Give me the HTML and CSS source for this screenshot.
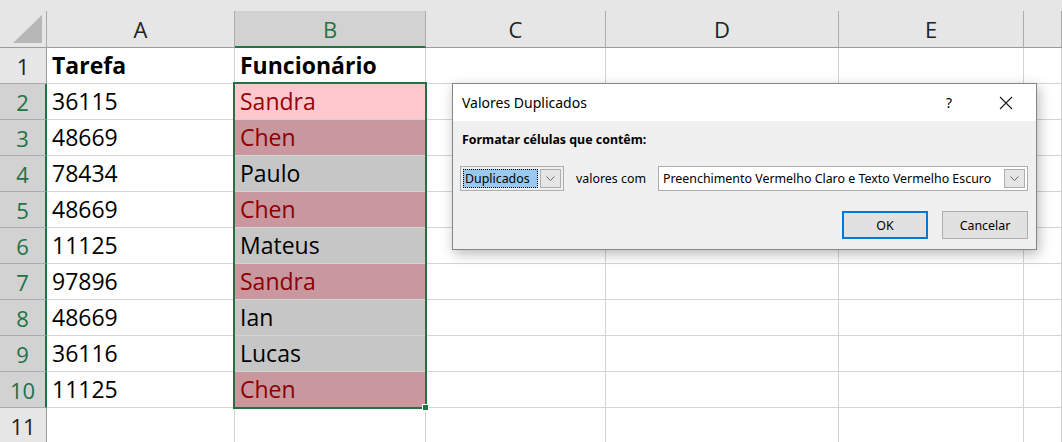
FILE: index.html
```html
<!DOCTYPE html>
<html lang="pt">
<head>
    <meta charset="UTF-8">
    <title>Valores Duplicados</title>
    <link rel="stylesheet" href="styles.css">
</head>
<body>

    <div class="sheet">
        <div class="strip"></div>

        <div class="corner">
            <svg width="30" height="29" viewBox="0 0 30 29"><polygon points="29,0 29,28 0,28" fill="#b7b7b7"/></svg>
        </div>
        <div class="colhead">A</div>
        <div class="colhead sel">B</div>
        <div class="colhead">C</div>
        <div class="colhead">D</div>
        <div class="colhead">E</div>
        <div class="colhead"></div>

        <div class="rowhead">1</div>
        <div class="cell bold">Tarefa</div>
        <div class="cell bold">Funcionário</div>
        <div class="cell"></div><div class="cell"></div><div class="cell"></div><div class="cell"></div>

        <div class="rowhead sel">2</div>
        <div class="cell">36115</div>
        <div class="cell dup active">Sandra</div>
        <div class="cell"></div><div class="cell"></div><div class="cell"></div><div class="cell"></div>

        <div class="rowhead sel">3</div>
        <div class="cell">48669</div>
        <div class="cell dup">Chen</div>
        <div class="cell"></div><div class="cell"></div><div class="cell"></div><div class="cell"></div>

        <div class="rowhead sel">4</div>
        <div class="cell">78434</div>
        <div class="cell picked">Paulo</div>
        <div class="cell"></div><div class="cell"></div><div class="cell"></div><div class="cell"></div>

        <div class="rowhead sel">5</div>
        <div class="cell">48669</div>
        <div class="cell dup">Chen</div>
        <div class="cell"></div><div class="cell"></div><div class="cell"></div><div class="cell"></div>

        <div class="rowhead sel">6</div>
        <div class="cell">11125</div>
        <div class="cell picked">Mateus</div>
        <div class="cell"></div><div class="cell"></div><div class="cell"></div><div class="cell"></div>

        <div class="rowhead sel">7</div>
        <div class="cell">97896</div>
        <div class="cell dup">Sandra</div>
        <div class="cell"></div><div class="cell"></div><div class="cell"></div><div class="cell"></div>

        <div class="rowhead sel">8</div>
        <div class="cell">48669</div>
        <div class="cell picked">Ian</div>
        <div class="cell"></div><div class="cell"></div><div class="cell"></div><div class="cell"></div>

        <div class="rowhead sel">9</div>
        <div class="cell">36116</div>
        <div class="cell picked">Lucas</div>
        <div class="cell"></div><div class="cell"></div><div class="cell"></div><div class="cell"></div>

        <div class="rowhead sel">10</div>
        <div class="cell">11125</div>
        <div class="cell dup">Chen</div>
        <div class="cell"></div><div class="cell"></div><div class="cell"></div><div class="cell"></div>

        <div class="rowhead">11</div>
        <div class="cell"></div><div class="cell"></div>
        <div class="cell"></div><div class="cell"></div><div class="cell"></div><div class="cell"></div>
    </div>

    <!-- selection box over B2:B10 -->
    <div class="selection"><span class="handle"></span></div>

    <div class="dialog">
        <div class="titlebar">
            <span class="title">Valores Duplicados</span>
            <span class="help">?</span>
            <span class="close">
                <svg width="14" height="14" viewBox="0 0 14 14"><path d="M1 1 L13 13 M13 1 L1 13" stroke="#1a1a1a" stroke-width="1.1" fill="none"/></svg>
            </span>
        </div>
        <div class="body">
            <div class="label">Formatar células que contêm:</div>
            <div class="controls">
                <div class="combo small">
                    <span class="value focus">Duplicados</span>
                    <span class="arrow"><svg width="9" height="5" viewBox="0 0 9 5"><polyline points="0.5,0.5 4.5,4.5 8.5,0.5" stroke="#666" fill="none"/></svg></span>
                </div>
                <span class="between">valores com</span>
                <div class="combo wide">
                    <span class="value">Preenchimento Vermelho Claro e Texto Vermelho Escuro</span>
                    <span class="arrow"><svg width="9" height="5" viewBox="0 0 9 5"><polyline points="0.5,0.5 4.5,4.5 8.5,0.5" stroke="#666" fill="none"/></svg></span>
                </div>
            </div>
            <div class="buttons">
                <button class="btn default">OK</button>
                <button class="btn">Cancelar</button>
            </div>
        </div>
    </div>

</body>
</html>
```

FILE: styles.css
```css
body {
    margin: 0;
    width: 1062px;
    height: 442px;
    overflow: hidden;
    background: #fff;
    position: relative;
    font-family: "Open Sans", "Liberation Sans", sans-serif;
}

.sheet {
    display: grid;
    grid-template-columns: 47px 188px 191px 180px 233px 185px 1fr;
    grid-template-rows: 11px 37px repeat(11, 36px);
}

.sheet > div {
    box-sizing: border-box;
}

.strip {
    grid-column: 1 / -1;
    background: #e6e6e6;
}

.corner {
    background: #e6e6e6;
    border-right: 1px solid #ababab;
    border-bottom: 1px solid #9b9b9b;
    display: flex;
    justify-content: flex-end;
    align-items: flex-end;
    padding: 0 3px 3px 0;
}

.colhead {
    background: #e6e6e6;
    border-right: 1px solid #ababab;
    border-bottom: 1px solid #9b9b9b;
    text-align: center;
    font-size: 22px;
    line-height: 36px;
    color: #222;
}

.colhead.sel {
    background: #d2d2d2;
    color: #217346;
    border-bottom: 2px solid #217346;
}

.rowhead {
    background: #e6e6e6;
    border-right: 1px solid #9b9b9b;
    border-bottom: 1px solid #ababab;
    text-align: center;
    font-size: 22px;
    line-height: 36px;
    color: #222;
}

.rowhead.sel {
    background: #d2d2d2;
    color: #217346;
    border-right: 2px solid #217346;
}

.cell {
    border-right: 1px solid #d4d4d4;
    border-bottom: 1px solid #d4d4d4;
    font-size: 23px;
    line-height: 35px;
    padding-left: 5px;
    color: #000;
    white-space: nowrap;
}

.cell.bold {
    font-weight: bold;
}

.cell.picked {
    background: #c6c6c6;
}

.cell.dup {
    background: #c9989e;
    color: #8c0005;
}

.cell.dup.active {
    background: #ffc7ce;
    color: #9c0006;
}

.selection {
    position: absolute;
    left: 233px;
    top: 82px;
    width: 194px;
    height: 327px;
    box-sizing: border-box;
    border: 2px solid #217346;
}

.handle {
    position: absolute;
    right: -4px;
    bottom: -4px;
    width: 5px;
    height: 5px;
    background: #217346;
    border: 1px solid #fff;
}

/* dialog */

.dialog {
    position: absolute;
    left: 452px;
    top: 83px;
    width: 585px;
    height: 167px;
    box-sizing: border-box;
    border: 1px solid #858585;
    background: #f0f0f0;
    box-shadow: 2px 4px 12px rgba(0, 0, 0, 0.28);
    font-family: "Noto Sans", "Open Sans", sans-serif;
    font-size: 12.4px;
    color: #000;
}

.titlebar {
    height: 37px;
    background: #fff;
    display: flex;
    align-items: center;
    padding-left: 9px;
}

.title {
    font-size: 14px;
    flex: 1;
}

.help {
    font-size: 14px;
    width: 20px;
    text-align: center;
    margin-right: 40px;
}

.close {
    display: flex;
    margin-right: 23px;
}

.body {
    padding: 11px 7px 0 7px;
}

.label {
    font-weight: bold;
    padding-left: 2px;
    line-height: 16px;
}

.controls {
    display: flex;
    align-items: center;
    margin-top: 18px;
    height: 25px;
}

.combo {
    box-sizing: border-box;
    height: 25px;
    border: 1px solid #adadad;
    background: #fff;
    display: flex;
    align-items: center;
    padding: 2px;
}

.combo.small {
    width: 104px;
    background: #f0f0f0;
}

.combo.wide {
    width: 370px;
}

.combo .value {
    flex: 1;
    height: 19px;
    line-height: 19px;
    padding-left: 2px;
    white-space: nowrap;
    overflow: hidden;
}

.combo .value.focus {
    background: #99c9ef;
    outline: 1px dotted #000;
    outline-offset: -1px;
}

.arrow {
    box-sizing: border-box;
    width: 21px;
    height: 19px;
    margin-left: 2px;
    background: #e5e5e5;
    border: 1px solid #adadad;
    display: flex;
    align-items: center;
    justify-content: center;
}

.between {
    margin: 0 12px 0 12px;
}

.buttons {
    display: flex;
    justify-content: flex-end;
    gap: 14px;
    margin-top: 20px;
    padding-right: 1px;
}

.btn {
    box-sizing: border-box;
    width: 86px;
    height: 28px;
    background: #e1e1e1;
    border: 1px solid #adadad;
    font-family: "Noto Sans", "Open Sans", sans-serif;
    font-size: 12.4px;
    color: #000;
    padding: 0;
}

.btn.default {
    border: 2px solid #0078d7;
}
```
